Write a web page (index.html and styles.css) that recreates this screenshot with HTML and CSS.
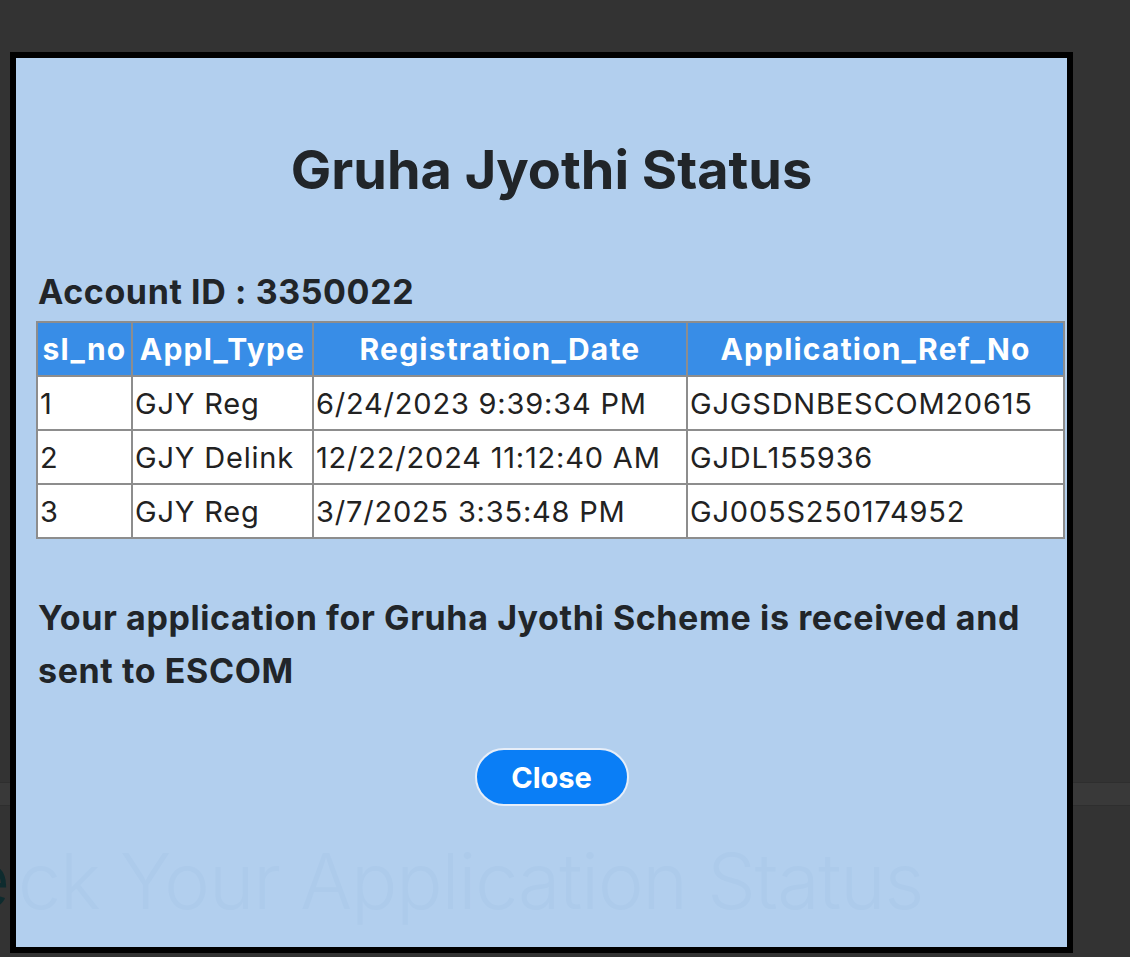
FILE: index.html
```html
<!DOCTYPE html>
<html lang="en">
<head>
    <meta charset="UTF-8">
    <meta name="viewport" content="width=device-width, initial-scale=1.0">
    <title>Gruha Jyothi Status</title>
    <link rel="stylesheet" href="styles.css">
</head>
<body>

<div class="page">
    <div class="page-band"></div>
    <h2 class="page-title">Che</h2>
</div>

<div class="modal">
    <div class="ghost-title">ck Your Application Status</div>
    <div class="modal-body">
        <h1>Gruha Jyothi Status</h1>
        <div class="account">Account ID : 3350022</div>
        <table class="status-table">
            <colgroup>
                <col class="c1">
                <col class="c2">
                <col class="c3">
                <col class="c4">
            </colgroup>
            <thead>
                <tr>
                    <th>sl_no</th>
                    <th>Appl_Type</th>
                    <th>Registration_Date</th>
                    <th>Application_Ref_No</th>
                </tr>
            </thead>
            <tbody>
                <tr>
                    <td>1</td>
                    <td>GJY Reg</td>
                    <td>6/24/2023 9:39:34 PM</td>
                    <td>GJGSDNBESCOM20615</td>
                </tr>
                <tr>
                    <td>2</td>
                    <td>GJY Delink</td>
                    <td>12/22/2024 11:12:40 AM</td>
                    <td>GJDL155936</td>
                </tr>
                <tr>
                    <td>3</td>
                    <td>GJY Reg</td>
                    <td>3/7/2025 3:35:48 PM</td>
                    <td>GJ005S250174952</td>
                </tr>
            </tbody>
        </table>
        <p class="message">Your application for Gruha Jyothi Scheme is received and sent to ESCOM</p>
        <div class="actions">
            <button class="close-btn">Close</button>
        </div>
    </div>
</div>

</body>
</html>
```

FILE: styles.css
```css
body {
    margin: 0;
    height: 957px;
    background-color: #333333;
    font-family: Inter, "Noto Sans", Arial, sans-serif;
    overflow: hidden;
}

.page {
    position: relative;
    height: 957px;
}

.page-band {
    position: absolute;
    left: 0;
    right: 0;
    top: 782px;
    height: 22px;
    background-color: #393939;
    border-top: 1px solid #2e2e2e;
    border-bottom: 1px solid #2e2e2e;
}

.page-title {
    position: absolute;
    right: 1121px;
    top: 832px;
    margin: 0;
    font-size: 77px;
    font-weight: 300;
    letter-spacing: -1.2px;
    color: #0e2b2e;
    white-space: nowrap;
}

.modal {
    position: absolute;
    left: 10px;
    top: 52px;
    width: 1051px;
    height: 889px;
    border: 6px solid #000000;
    background-color: #b2cfee;
    overflow: hidden;
}

.ghost-title {
    position: absolute;
    left: 2px;
    top: 776px;
    font-size: 77px;
    font-weight: 300;
    letter-spacing: -1.1px;
    color: #adcbeb;
    white-space: nowrap;
}

.modal-body {
    position: relative;
    display: flex;
    flex-direction: column;
    padding: 0 0 0 22px;
    color: #212529;
}

h1 {
    margin: 82px 0 0 0;
    padding-right: 2px;
    text-align: center;
    font-size: 54px;
    line-height: 60px;
    font-weight: 700;
}

.account {
    margin-top: 72px;
    font-size: 34px;
    line-height: 40px;
    font-weight: 700;
    letter-spacing: 0.6px;
}

.status-table {
    margin-top: 9px;
    margin-left: -2px;
    width: 1027px;
    border-collapse: collapse;
    table-layout: fixed;
    font-size: 29px;
    letter-spacing: 0.8px;
}

.c1 { width: 95px; }
.c2 { width: 181px; }
.c3 { width: 374px; }
.c4 { width: 377px; }

.status-table th,
.status-table td {
    height: 52px;
    padding: 0 2px;
    border: 2px solid #8d8d8d;
    white-space: nowrap;
    overflow: hidden;
}

.status-table th {
    background-color: #388de7;
    color: #ffffff;
    font-size: 30px;
    font-weight: 700;
    letter-spacing: 1.2px;
    text-align: center;
}

.status-table td {
    background-color: #ffffff;
    color: #222222;
    text-align: left;
}

.message {
    margin: 52px 20px 0 0;
    font-size: 34px;
    line-height: 53px;
    font-weight: 700;
    letter-spacing: 0.6px;
}

.actions {
    display: flex;
    justify-content: center;
    margin-top: 51px;
    padding-right: 2px;
}

.close-btn {
    width: 154px;
    height: 58px;
    border: 2px solid #e6eef9;
    border-radius: 30px;
    background-color: #0a7ef6;
    color: #ffffff;
    font-family: inherit;
    font-size: 29px;
    font-weight: 700;
    cursor: pointer;
}
```
